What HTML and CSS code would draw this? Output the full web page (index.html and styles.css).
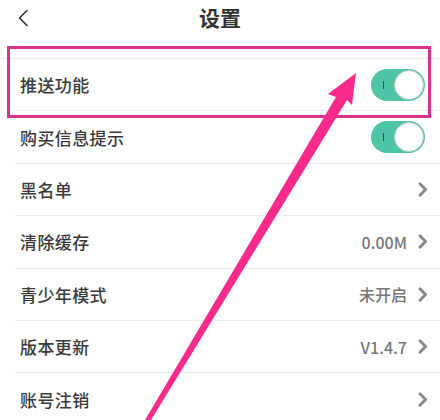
FILE: index.html
```html
<!DOCTYPE html>
<html lang="zh-CN">
<head>
<meta charset="utf-8">
<title>设置</title>
<link rel="stylesheet" href="styles.css">
</head>
<body>
<div class="page">
  <header class="topbar">
    <svg class="back" width="12" height="18" viewBox="0 0 12 18"><path d="M10 1.5 L2.5 9 L10 16.5" fill="none" stroke="#333" stroke-width="1.6" stroke-linecap="round" stroke-linejoin="round"/></svg>
    <h1 class="title">设置</h1>
  </header>
  <ul class="list">
    <li class="row"><span class="label">推送功能</span><span class="toggle"><i class="mark"></i><i class="knob"></i></span></li>
    <li class="row"><span class="label">购买信息提示</span><span class="toggle"><i class="mark"></i><i class="knob"></i></span></li>
    <li class="row"><span class="label">黑名单</span><span class="right"><svg class="chev" width="10" height="15" viewBox="0 0 10 15"><path d="M2 1.8 L7.6 7.5 L2 13.2" fill="none" stroke="#888" stroke-width="2.8" stroke-linecap="round" stroke-linejoin="round"/></svg></span></li>
    <li class="row"><span class="label">清除缓存</span><span class="right"><span class="value">0.00M</span><svg class="chev" width="10" height="15" viewBox="0 0 10 15"><path d="M2 1.8 L7.6 7.5 L2 13.2" fill="none" stroke="#888" stroke-width="2.8" stroke-linecap="round" stroke-linejoin="round"/></svg></span></li>
    <li class="row"><span class="label">青少年模式</span><span class="right"><span class="value">未开启</span><svg class="chev" width="10" height="15" viewBox="0 0 10 15"><path d="M2 1.8 L7.6 7.5 L2 13.2" fill="none" stroke="#888" stroke-width="2.8" stroke-linecap="round" stroke-linejoin="round"/></svg></span></li>
    <li class="row"><span class="label">版本更新</span><span class="right"><span class="value">V1.4.7</span><svg class="chev" width="10" height="15" viewBox="0 0 10 15"><path d="M2 1.8 L7.6 7.5 L2 13.2" fill="none" stroke="#888" stroke-width="2.8" stroke-linecap="round" stroke-linejoin="round"/></svg></span></li>
    <li class="row"><span class="label">账号注销</span><span class="right"><svg class="chev" width="10" height="15" viewBox="0 0 10 15"><path d="M2 1.8 L7.6 7.5 L2 13.2" fill="none" stroke="#888" stroke-width="2.8" stroke-linecap="round" stroke-linejoin="round"/></svg></span></li>
  </ul>
  <div class="highlight"></div>
  <svg class="arrow" width="440" height="420" viewBox="0 0 440 420">
    <polygon points="356,73 352,105 347,100 151,420 145,420 336,97 328,94" fill="#f82a8c"/>
  </svg>
</div>
</body>
</html>
```
FILE: styles.css
```css
* { box-sizing: border-box; }
html, body { margin: 0; padding: 0; background: #fff; }
body {
  font-family: "Noto Sans CJK SC", "Noto Sans", sans-serif;
  color: #333;
  width: 440px;
  height: 420px;
  overflow: hidden;
}
.page { position: relative; width: 440px; height: 420px; overflow: hidden; }
.topbar {
  position: relative;
  height: 59px;
  border-bottom: 1px solid #ececec;
  display: flex;
  justify-content: center;
  align-items: flex-start;
  padding-top: 2px;
}
.back { position: absolute; left: 17px; top: 9px; }
.title {
  margin: 0;
  font-size: 21px;
  font-weight: 700;
  line-height: 30px;
  color: #333;
}
.list { list-style: none; margin: 0; padding: 0; }
.row {
  height: 52.4px;
  margin-left: 15px;
  padding: 0 12px 0 5px;
  border-bottom: 1px solid #ececec;
  display: flex;
  align-items: center;
  justify-content: space-between;
}
.label { font-size: 17px; font-weight: 500; color: #3a3a3a; letter-spacing: 0.4px; }
.right { display: flex; align-items: center; gap: 11px; }
.value { font-size: 16px; font-weight: 500; color: #777; }
.chev { display: block; }
.toggle {
  position: relative;
  width: 54px;
  height: 32px;
  border-radius: 16px;
  background: #4ec5a6;
  margin-right: 3px;
}
.mark {
  position: absolute;
  left: 12px;
  top: 12px;
  width: 1px;
  height: 8px;
  background: #3a4a44;
}
.knob {
  position: absolute;
  right: 1px;
  top: 1px;
  width: 30px;
  height: 30px;
  border-radius: 50%;
  background: #fff;
  border: 1px solid #b9c9c3;
}
.highlight {
  position: absolute;
  left: 7px;
  top: 46px;
  width: 424px;
  height: 72px;
  border: 3px solid #d9338c;
}
.arrow { position: absolute; left: 0; top: 0; }
```
